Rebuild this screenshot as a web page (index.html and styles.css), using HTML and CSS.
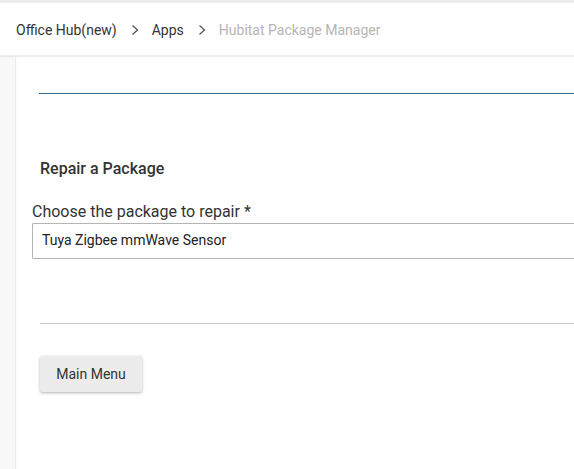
FILE: index.html
```html
<!DOCTYPE html>
<html>
<head>
<meta charset="utf-8">
<link rel="stylesheet" href="styles.css">
</head>
<body>
<header class="topbar">
  <nav class="crumbs">
    <span class="crumb">Office Hub(new)</span>
    <svg class="chev" width="10" height="12" viewBox="0 0 10 12"><path d="M2.5 1.5 L7.5 6 L2.5 10.5" fill="none" stroke="#555" stroke-width="1.3"/></svg>
    <span class="crumb">Apps</span>
    <svg class="chev" width="10" height="12" viewBox="0 0 10 12"><path d="M2.5 1.5 L7.5 6 L2.5 10.5" fill="none" stroke="#555" stroke-width="1.3"/></svg>
    <span class="crumb current">Hubitat Package Manager</span>
  </nav>
</header>
<div class="layout">
  <aside class="side"></aside>
  <main class="card">
    <div class="rule-blue"></div>
    <h2 class="section-title">Repair a Package</h2>
    <label class="field-label">Choose the package to repair *</label>
    <div class="select">Tuya Zigbee mmWave Sensor</div>
    <div class="rule-gray"></div>
    <button class="btn">Main Menu</button>
  </main>
</div>
</body>
</html>
```

FILE: styles.css
```css
html, body {
  margin: 0;
  padding: 0;
  background: #ffffff;
  font-family: Roboto, "Liberation Sans", Arial, sans-serif;
  overflow: hidden;
  width: 574px;
  height: 469px;
}

.topbar {
  box-sizing: border-box;
  height: 57px;
  border-top: 3px solid #ececec;
  border-bottom: 2px solid #ececec;
  background: #ffffff;
  display: flex;
  align-items: center;
  padding-left: 16px;
}

.crumbs {
  display: flex;
  align-items: center;
  font-size: 14px;
  color: #333333;
  padding-top: 1px;
}

.chev {
  margin: 0 12px 0 13px;
}

.crumb.current {
  color: #b5b5b5;
}

.layout {
  display: flex;
  height: 412px;
}

.side {
  width: 15px;
  flex: none;
  background: #f8f8f8;
  box-shadow: 1px 0 1px rgba(0,0,0,0.08);
  z-index: 1;
}

.card {
  flex: 1;
  min-width: 0;
  background: #ffffff;
  padding-top: 36px;
  padding-left: 17px;
}

.rule-blue {
  margin-left: 7px;
  height: 1px;
  background: #2a6e88;
}

.section-title {
  margin: 66px 0 0 8px;
  font-size: 16px;
  font-weight: 500;
  color: #333333;
  line-height: 17px;
}

.field-label {
  display: block;
  margin-top: 26px;
  font-size: 16px;
  color: #333333;
  line-height: 18px;
}

.select {
  box-sizing: border-box;
  margin-top: 2px;
  height: 36px;
  border: 1px solid #b4b4b4;
  border-right: none;
  border-radius: 2px 0 0 2px;
  padding-left: 9px;
  font-size: 14px;
  color: #222222;
  line-height: 33px;
}

.rule-gray {
  margin-top: 64px;
  margin-left: 8px;
  height: 1px;
  background: #c8c8c8;
}

.btn {
  margin-top: 32px;
  margin-left: 8px;
  width: 102px;
  height: 36px;
  border: none;
  border-radius: 2px;
  background: #ececec;
  box-shadow: 0 1px 3px rgba(0,0,0,0.3);
  font-family: Roboto, "Liberation Sans", Arial, sans-serif;
  font-size: 14px;
  color: #333333;
  padding: 0;
}
```
